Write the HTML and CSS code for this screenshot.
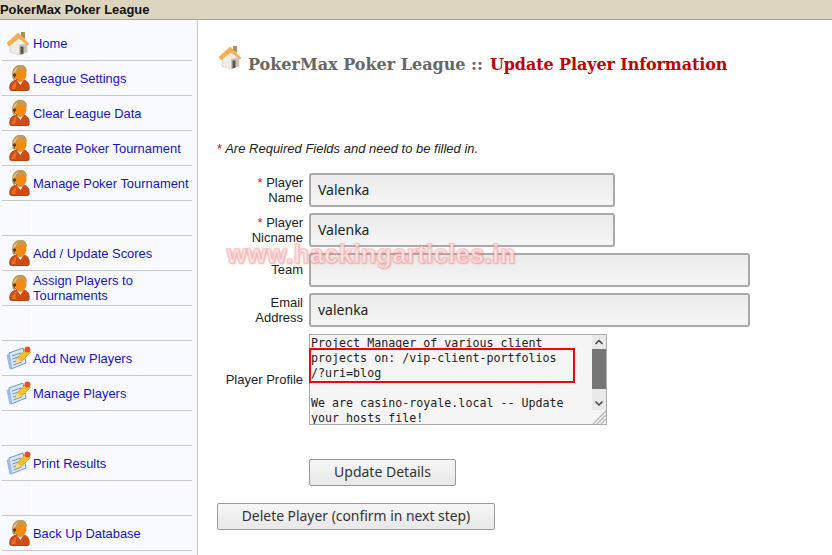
FILE: index.html
```html
<!DOCTYPE html>
<html lang="en">
<head>
<meta charset="utf-8">
<title>PokerMax Poker League</title>
<link rel="stylesheet" href="styles.css">
</head>
<body>
<svg class="defs" width="0" height="0" aria-hidden="true">
  <defs>
    <symbol id="house" viewBox="0 0 24 24">
      <path d="M15 1h4v7l-4-3z" fill="#b08a5c"/>
      <path d="M4 13l8-7 9 7v8l-8 3-9-3z" fill="#f0ede6" stroke="#c9c5bc" stroke-width=".6"/>
      <path d="M13 24V14l8-2v9z" fill="#c8c4ba"/>
      <path d="M1 12L12 2l4 4 7 7-1 1-9-7L3 15z" fill="#f9ae4c" stroke="#e89a38" stroke-width=".5"/>
      <path d="M14.500 15.500h3v7l-3 1z" fill="#5b5546"/>
    </symbol>
    <symbol id="person" viewBox="0 0 20 26">
      <path d="M.5 25C-.5 20 1 16 7 15l3 1 4-1c5 1 6.500 5 5.500 10l-2 1H2.500z" fill="#cf4c12" stroke="#8e2f08" stroke-width=".6"/>
      <path d="M2 24c0-3 2-6 5-8l-1 8z" fill="#ec6c20"/>
      <path d="M7 15l4 5 3-5-3 1z" fill="#e6eaf5"/>
      <path d="M5 15c-2-1-2-3-2-6C3 3 7 0 11 0c4 0 6 3 6 6l-1 2-10 3z" fill="#c79a50" stroke="#8e6c30" stroke-width=".4"/>
      <path d="M6 9c1-3 4-5 7-4 3 0 4 2 4 4 0 4-3 8-6 8-3 0-5-3-5-8z" fill="#f28b16"/>
      <path d="M6 4c-1 2-2 3-2 5M8 2.500C7 3 6 5 5.500 7" stroke="#f4e0b0" stroke-width=".7" fill="none"/>
      <circle cx="5" cy="10" r="1.700" fill="#5a4020"/>
      <path d="M5 11c0 2 1 3 3 4" stroke="#5a4020" stroke-width=".7" fill="none"/>
    </symbol>
    <symbol id="note" viewBox="0 0 25 24">
      <path d="M3 7l14-5 3 15-15 6z" fill="#d8e6fa" stroke="#5f8ac4" stroke-width=".9"/>
      <path d="M0.500 9l3-1 3 15-3 .5z" fill="#9cbbe4"/>
      <path d="M6 10l9-3M6.500 13l8-3M7 16l6-2M7.500 19l8-3" stroke="#5f8ac4" stroke-width=".9" fill="none"/>
      <path d="M9 18l2-6 9-9 4.500 3.500-9 9z" fill="#f7c022" stroke="#c98a10" stroke-width=".5"/>
      <path d="M9 18l2-6 4 3.500z" fill="#f5dcb0"/>
      <circle cx="21.500" cy="3.500" r="3" fill="#e8502c"/>
    </symbol>
  </defs>
</svg>

<header class="topbar">PokerMax Poker League</header>

<div class="layout">
  <nav class="sidebar">
    <a class="row" href="#"><span class="ico"><svg class="i-house"><use href="#house"/></svg></span><span class="lbl">Home</span></a>
    <a class="row" href="#"><span class="ico"><svg class="i-person"><use href="#person"/></svg></span><span class="lbl">League Settings</span></a>
    <a class="row" href="#"><span class="ico"><svg class="i-person"><use href="#person"/></svg></span><span class="lbl">Clear League Data</span></a>
    <a class="row" href="#"><span class="ico"><svg class="i-person"><use href="#person"/></svg></span><span class="lbl">Create Poker Tournament</span></a>
    <a class="row" href="#"><span class="ico"><svg class="i-person"><use href="#person"/></svg></span><span class="lbl">Manage Poker Tournament</span></a>
    <div class="row"><span class="ico"></span></div>
    <a class="row" href="#"><span class="ico"><svg class="i-person"><use href="#person"/></svg></span><span class="lbl">Add / Update Scores</span></a>
    <a class="row" href="#"><span class="ico"><svg class="i-person"><use href="#person"/></svg></span><span class="lbl">Assign Players to Tournaments</span></a>
    <div class="row"><span class="ico"></span></div>
    <a class="row" href="#"><span class="ico"><svg class="i-note"><use href="#note"/></svg></span><span class="lbl">Add New Players</span></a>
    <a class="row" href="#"><span class="ico"><svg class="i-note"><use href="#note"/></svg></span><span class="lbl">Manage Players</span></a>
    <div class="row"><span class="ico"></span></div>
    <a class="row" href="#"><span class="ico"><svg class="i-note"><use href="#note"/></svg></span><span class="lbl">Print Results</span></a>
    <div class="row"><span class="ico"></span></div>
    <a class="row" href="#"><span class="ico"><svg class="i-person"><use href="#person"/></svg></span><span class="lbl">Back Up Database</span></a>
  </nav>

  <main class="content">
    <h1 class="title"><svg class="i-title"><use href="#house"/></svg><span class="t-grey">PokerMax Poker League ::</span> <span class="t-red">Update Player Information</span></h1>
    <p class="note"><span class="req">*</span> Are Required Fields and need to be filled in.</p>

    <form class="form">
      <label class="f-label"><span class="req">*</span> Player<br>Name</label>
      <input class="field short" type="text" value="Valenka">
      <label class="f-label"><span class="req">*</span> Player<br>Nicname</label>
      <input class="field short" type="text" value="Valenka">
      <label class="f-label team-label">Team</label>
      <input class="field long" type="text" value="">
      <label class="f-label">Email<br>Address</label>
      <input class="field long" type="text" value="valenka">
      <label class="f-label profile-label">Player Profile</label>
      <div class="profile">
        <textarea class="area" rows="6" readonly>Project Manager of various client projects on: /vip-client-portfolios /?uri=blog

We are casino-royale.local -- Update your hosts file!</textarea>
        <div class="scroll">
          <svg class="arrow" viewBox="0 0 14 14"><path d="M3.500 9L7 5.500 10.500 9" fill="none" stroke="#444" stroke-width="1.500"/></svg>
          <div class="thumb"></div>
          <div class="track"></div>
          <svg class="arrow" viewBox="0 0 14 14"><path d="M3.500 5.500L7 9l3.500-3.500" fill="none" stroke="#444" stroke-width="1.500"/></svg>
        </div>
        <svg class="grip" viewBox="0 0 14 14"><path d="M14 1L1 14M14 5L5 14M14 9L9 14" stroke="#b5b5b5" stroke-width="1.300"/></svg>
        <div class="mark"></div>
      </div>
      <div class="submit-cell"><button class="btn btn-update" type="button">Update Details</button></div>
    </form>
    <button class="btn btn-delete" type="button">Delete Player (confirm in next step)</button>
    <div class="watermark">www.hackingarticles.in</div>
  </main>
</div>
</body>
</html>
```

FILE: styles.css
```css
* { box-sizing: border-box; }
html, body { margin: 0; padding: 0; height: 555px; overflow: hidden; background: #fff; }
body { font-family: "Liberation Sans", Arial, sans-serif; font-size: 13px; color: #222; }
.defs { position: absolute; }

.topbar {
  height: 20px;
  background: #ded5c0;
  border-bottom: 1px solid #a8a296;
  font-weight: bold;
  font-size: 12.930px;
  line-height: 19px;
  color: #111;
}

.layout { display: flex; height: 535px; }

.sidebar {
  width: 198px;
  flex: none;
  padding: 6px 5px 0 2px;
  background: #f9faff;
  border-right: 1px solid #c6c6c6;
  font-size: 12.930px;
}
.row {
  display: flex;
  height: 35px;
  border-bottom: 1px solid #c8c8c8;
  text-decoration: none;
  color: #1414c8;
  line-height: 15px;
}
.ico {
  width: 30px;
  flex: none;
  display: flex;
  align-items: center;
  justify-content: flex-end;
  border-right: 1px solid #ffffff;
}
.lbl { align-self: center; padding-left: 1px; }
.i-house { width: 24px; height: 24px; margin-right: 1px; }
.i-person { width: 21px; height: 26px; margin-right: 1px; }
.i-note { width: 25px; height: 24px; margin-right: 0; }

.content { position: relative; flex: 1; padding: 25px 0 0 19px; }
.title { margin: 0; height: 68px; font-family: "DejaVu Serif", serif; font-size: 16px; font-weight: bold; line-height: 39px; display: flex; align-items: flex-start; white-space: pre; }
.i-title { width: 24px; height: 24px; margin: 0 6px 0 1px; }
.t-grey { color: #666; }
.t-red { color: #c00000; margin-left: 7px; letter-spacing: -.1px; }

.note { margin: 0; padding-top: 28px; height: 60px; font-style: italic; color: #222; line-height: 15px; }
.req { color: #e01010; font-style: normal; }

.form {
  display: grid;
  grid-template-columns: 86px auto;
  column-gap: 6px;
  justify-content: start;
  align-items: center;
  row-gap: 6px;
}
.f-label { text-align: right; line-height: 15px; color: #222; }
.team-label { padding-bottom: 2px; }
.field {
  height: 34px;
  padding: 0 7px 2px;
  border: 2px solid #aaa;
  border-radius: 3px;
  background: linear-gradient(#ebebeb, #f5f5f5);
  font-family: "Noto Sans", sans-serif;
  font-size: 14px;
  color: #222;
  outline: none;
}
.short { width: 306px; }
.long { width: 441px; }

.profile { position: relative; width: 298px; height: 91px; margin-top: 1px; }
.area {
  display: block;
  width: 298px;
  height: 91px;
  padding: 1px 39px 0 1px;
  border: 1px solid #aaa;
  background: #f5f5f5;
  font-family: "DejaVu Sans Mono", monospace;
  font-size: 11.670px;
  line-height: 15px;
  color: #222;
  resize: none;
  overflow: hidden;
  outline: none;
}
.scroll {
  position: absolute;
  top: 1px;
  right: 1px;
  width: 14px;
  height: 75px;
  display: flex;
  flex-direction: column;
  background: #e9e9e9;
}
.arrow { width: 14px; height: 14px; flex: none; }
.thumb { height: 40px; flex: none; background: #767676; }
.track { flex: 1; }
.grip { position: absolute; right: 1px; bottom: 1px; width: 14px; height: 14px; }
.mark {
  position: absolute;
  left: 0;
  top: 14px;
  width: 266px;
  height: 35px;
  border: 2px solid #f00;
}

.submit-cell { grid-column: 2; margin-top: 28px; }
.btn {
  display: block;
  height: 27px;
  padding: 0 0 2px;
  border: 1px solid #999;
  border-radius: 2px;
  background: linear-gradient(#f6f6f6, #e8e8e8);
  font-family: "Noto Sans", sans-serif;
  font-size: 14px;
  color: #333;
}
.btn-update { width: 147px; }
.btn-delete { width: 278px; margin-top: 17px; font-size: 13.900px; }

.watermark {
  position: absolute;
  left: 29px;
  top: 218px;
  font-family: "Liberation Sans", sans-serif;
  font-weight: bold;
  font-size: 25px;
  line-height: 32px;
  letter-spacing: .6px;
  color: rgba(255, 255, 255, .75);
  -webkit-text-stroke: 2px rgba(240, 130, 130, .3);
  text-shadow: 0 0 3px rgba(240, 120, 120, .5), 1px 1px 2px rgba(240, 120, 120, .3);
  white-space: nowrap;
  pointer-events: none;
}
```
